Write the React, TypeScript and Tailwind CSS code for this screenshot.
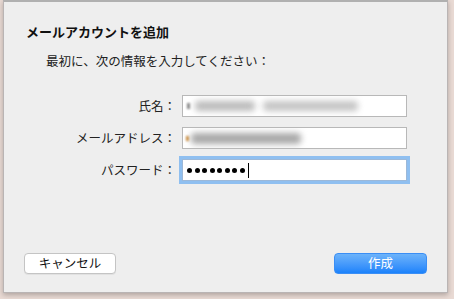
import React from "react";

const font = { fontFamily: '"Noto Sans CJK JP", "Noto Sans", sans-serif' };

function Row({ label, children }: { label: string; children: React.ReactNode }) {
  return (
    <div className="flex items-center h-[22px]">
      <div className="w-[178px] text-right pr-[6px] text-[12.5px] text-[#222]">{label}</div>
      {children}
    </div>
  );
}

export default function App() {
  return (
    <div className="w-[454px] h-[299px] bg-[#e9dad4] flex pl-[3px] pr-[6px] pb-[6px]" style={font}>
      <div className="flex-1 flex flex-col bg-[#eeeeee] border-l border-r border-b border-[#b9b4b4] border-t-[2px] border-t-[#b0b0b0] shadow-[0_2px_5px_rgba(0,0,0,0.25)]">
        <div className="pl-[22px] pt-[21px] text-[13px] font-bold text-[#111] leading-[18px]">
          メールアカウントを追加
        </div>
        <div className="pl-[42px] pt-[11px] text-[12.5px] text-[#222] leading-[18px]">
          最初に、次の情報を入力してください：
        </div>
        <div className="flex flex-col gap-[10px] pt-[25px]">
          <Row label="氏名：">
            <div className="w-[225px] h-[22px] bg-white border border-[#b8b8b8] relative overflow-hidden">
              <div className="absolute left-[4px] top-[7px] w-[3px] h-[6px] bg-[#888] blur-[1px]" />
              <div className="absolute left-[12px] top-[5px] w-[60px] h-[10px] bg-[#bbb] rounded blur-[3px]" />
              <div className="absolute left-[80px] top-[5px] w-[95px] h-[10px] bg-[#c4c4c4] rounded blur-[3px]" />
            </div>
          </Row>
          <Row label="メールアドレス：">
            <div className="w-[225px] h-[22px] bg-white border border-[#b8b8b8] relative overflow-hidden">
              <div className="absolute left-[3px] top-[8px] w-[3px] h-[5px] bg-[#d09040] blur-[1px]" />
              <div className="absolute left-[8px] top-[5px] w-[110px] h-[11px] bg-[#a8a8a8] rounded blur-[3px]" />
            </div>
          </Row>
          <Row label="パスワード：">
            <div className="w-[225px] h-[22px] bg-white border border-[#9cb8d8] shadow-[0_0_0_3px_#8fbff0] flex items-center pl-[4px] gap-[2.5px]">
              {[0, 1, 2, 3, 4, 5, 6, 7].map((i) => (
                <span key={i} className="w-[5px] h-[5px] rounded-full bg-black" />
              ))}
              <span className="w-px h-[15px] bg-black ml-px" />
            </div>
          </Row>
        </div>
        <div className="flex-1" />
        <div className="flex justify-between px-[20px] pb-[18px]">
          <button className="w-[92px] h-[21px] bg-white border border-[#c4c4c4] rounded-[4px] text-[12.5px] text-[#111] leading-none shadow-[0_1px_0_rgba(0,0,0,0.05)]">
            キャンセル
          </button>
          <button className="w-[93px] h-[21px] rounded-[4px] text-[12.5px] text-white leading-none bg-gradient-to-b from-[#6cb3fa] to-[#1a82fb] border border-[#3a8ef5]">
            作成
          </button>
        </div>
      </div>
    </div>
  );
}
